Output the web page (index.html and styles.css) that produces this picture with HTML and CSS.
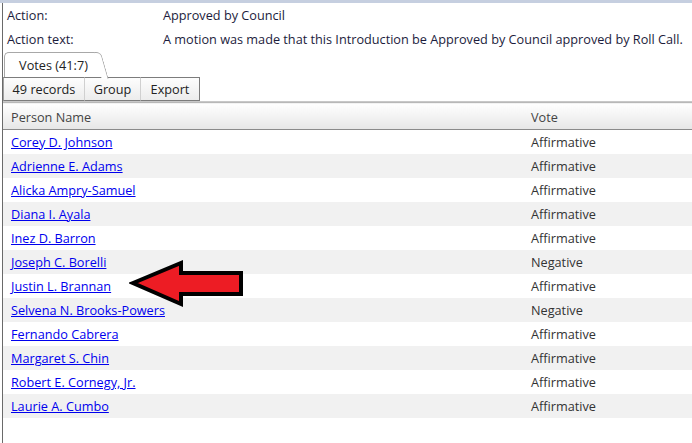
FILE: index.html
```html
<!DOCTYPE html>
<html lang="en">
<head>
  <meta charset="UTF-8" />
  <title>Legislation Details</title>
  <link rel="stylesheet" href="styles.css">
</head>
<body>
  <div class="frame">
    <div class="info">
      <div class="info-row">
        <span class="info-label">Action:</span>
        <span class="info-value">Approved by Council</span>
      </div>
      <div class="info-row">
        <span class="info-label">Action text:</span>
        <span class="info-value">A motion was made that this Introduction be Approved by Council approved by Roll Call.</span>
      </div>
    </div>

    <div class="tabs">
      <div class="tab">Votes (41:7)</div>
    </div>

    <div class="toolbar">
      <button class="tool-btn btn-records">49 records</button>
      <button class="tool-btn btn-group">Group</button>
      <button class="tool-btn btn-export">Export</button>
    </div>

    <table class="grid">
      <thead>
        <tr>
          <th class="col-name">Person Name</th>
          <th class="col-vote">Vote</th>
        </tr>
      </thead>
      <tbody id="voteRows"></tbody>
    </table>

    <svg class="arrow" width="124" height="52" viewBox="0 0 124 52">
      <polygon points="4,25 52,5 52,15 112,15 112,36 52,36 52,46" fill="#ed1c24" stroke="#000" stroke-width="4" stroke-linejoin="miter"/>
    </svg>
  </div>

  <script>
    const votes = [
      ["Corey D. Johnson", "Affirmative"],
      ["Adrienne E. Adams", "Affirmative"],
      ["Alicka Ampry-Samuel", "Affirmative"],
      ["Diana I. Ayala", "Affirmative"],
      ["Inez D. Barron", "Affirmative"],
      ["Joseph C. Borelli", "Negative"],
      ["Justin L. Brannan", "Affirmative"],
      ["Selvena N. Brooks-Powers", "Negative"],
      ["Fernando Cabrera", "Affirmative"],
      ["Margaret S. Chin", "Affirmative"],
      ["Robert E. Cornegy, Jr.", "Affirmative"],
      ["Laurie A. Cumbo", "Affirmative"]
    ];
    const body = document.getElementById("voteRows");
    votes.forEach(v => {
      body.innerHTML += `<tr><td class="col-name"><a href="#">${v[0]}</a></td><td class="col-vote">${v[1]}</td></tr>`;
    });
  </script>
</body>
</html>
```

FILE: styles.css
```css
* {
  box-sizing: border-box;
}
body {
  margin: 0;
  font-family: 'Open Sans', 'Noto Sans', sans-serif;
  font-size: 12.7px;
  color: #1c1c3c;
  background: #fff;
  border-top: 3px solid #c6cfe0;
  height: 443px;
  overflow: hidden;
}
.frame {
  position: relative;
  margin-left: 2px;
  border-left: 1px solid #6a6a6a;
  height: 440px;
}

/* action info */
.info-row {
  display: flex;
  height: 24px;
  align-items: center;
  white-space: nowrap;
}
.info-label {
  width: 160px;
  padding-left: 4px;
}

/* tab strip */
.tabs {
  display: flex;
  height: 26px;
  padding-top: 1px;
}
.tab {
  position: relative;
  width: 92px;
  margin-left: 1px;
  border: 1px solid #a8a8a8;
  border-right: none;
  border-bottom: none;
  border-radius: 5px 0 0 0;
  background: #fff;
  color: #222;
  display: flex;
  align-items: center;
  justify-content: center;
  padding-left: 6px;
  padding-bottom: 1px;
}
.tab::after {
  content: "";
  position: absolute;
  top: -1px;
  right: -5px;
  width: 6px;
  height: 26px;
  background: #fff;
  border-top: 1px solid #a8a8a8;
  border-right: 1px solid #a8a8a8;
  border-top-right-radius: 5px;
  transform: skewX(16deg);
  transform-origin: top;
}

/* toolbar */
.toolbar {
  display: flex;
  height: 25px;
  border-bottom: 1px solid #c8c8c8;
}
.tool-btn {
  font: inherit;
  color: #222;
  height: 24px;
  margin: 0;
  padding: 0;
  white-space: nowrap;
  border: 1px solid #7c7c7c;
  background: linear-gradient(#fdfdfd, #ececec);
}
.btn-records {
  width: 82px;
  border-left-color: #a0a0a0;
}
.btn-group {
  width: 57px;
  margin-left: -1px;
  border-left-color: #d0d0d0;
}
.btn-export {
  width: 60px;
  margin-left: -1px;
  border-left-color: #d0d0d0;
}

/* grid */
.grid {
  width: 100%;
  border-collapse: collapse;
}
.grid th {
  height: 27px;
  padding-top: 3px;
  font-weight: normal;
  text-align: left;
  color: #444;
  background: linear-gradient(#ffffff, #e6e6e6);
  border-top: 1px solid #b8b8b8;
  border-bottom: 1px solid #8a8a8a;
}
.grid td {
  height: 24px;
  color: #333;
}
.grid tbody tr:nth-child(even) td {
  background: #f1f1f1;
}
.col-name {
  padding-left: 8px;
  width: 520px;
}
.col-vote {
  padding-left: 8px;
}
.grid a {
  color: #0000ee;
}

/* callout arrow over the grid */
.arrow {
  position: absolute;
  left: 126px;
  top: 255px;
}
```
